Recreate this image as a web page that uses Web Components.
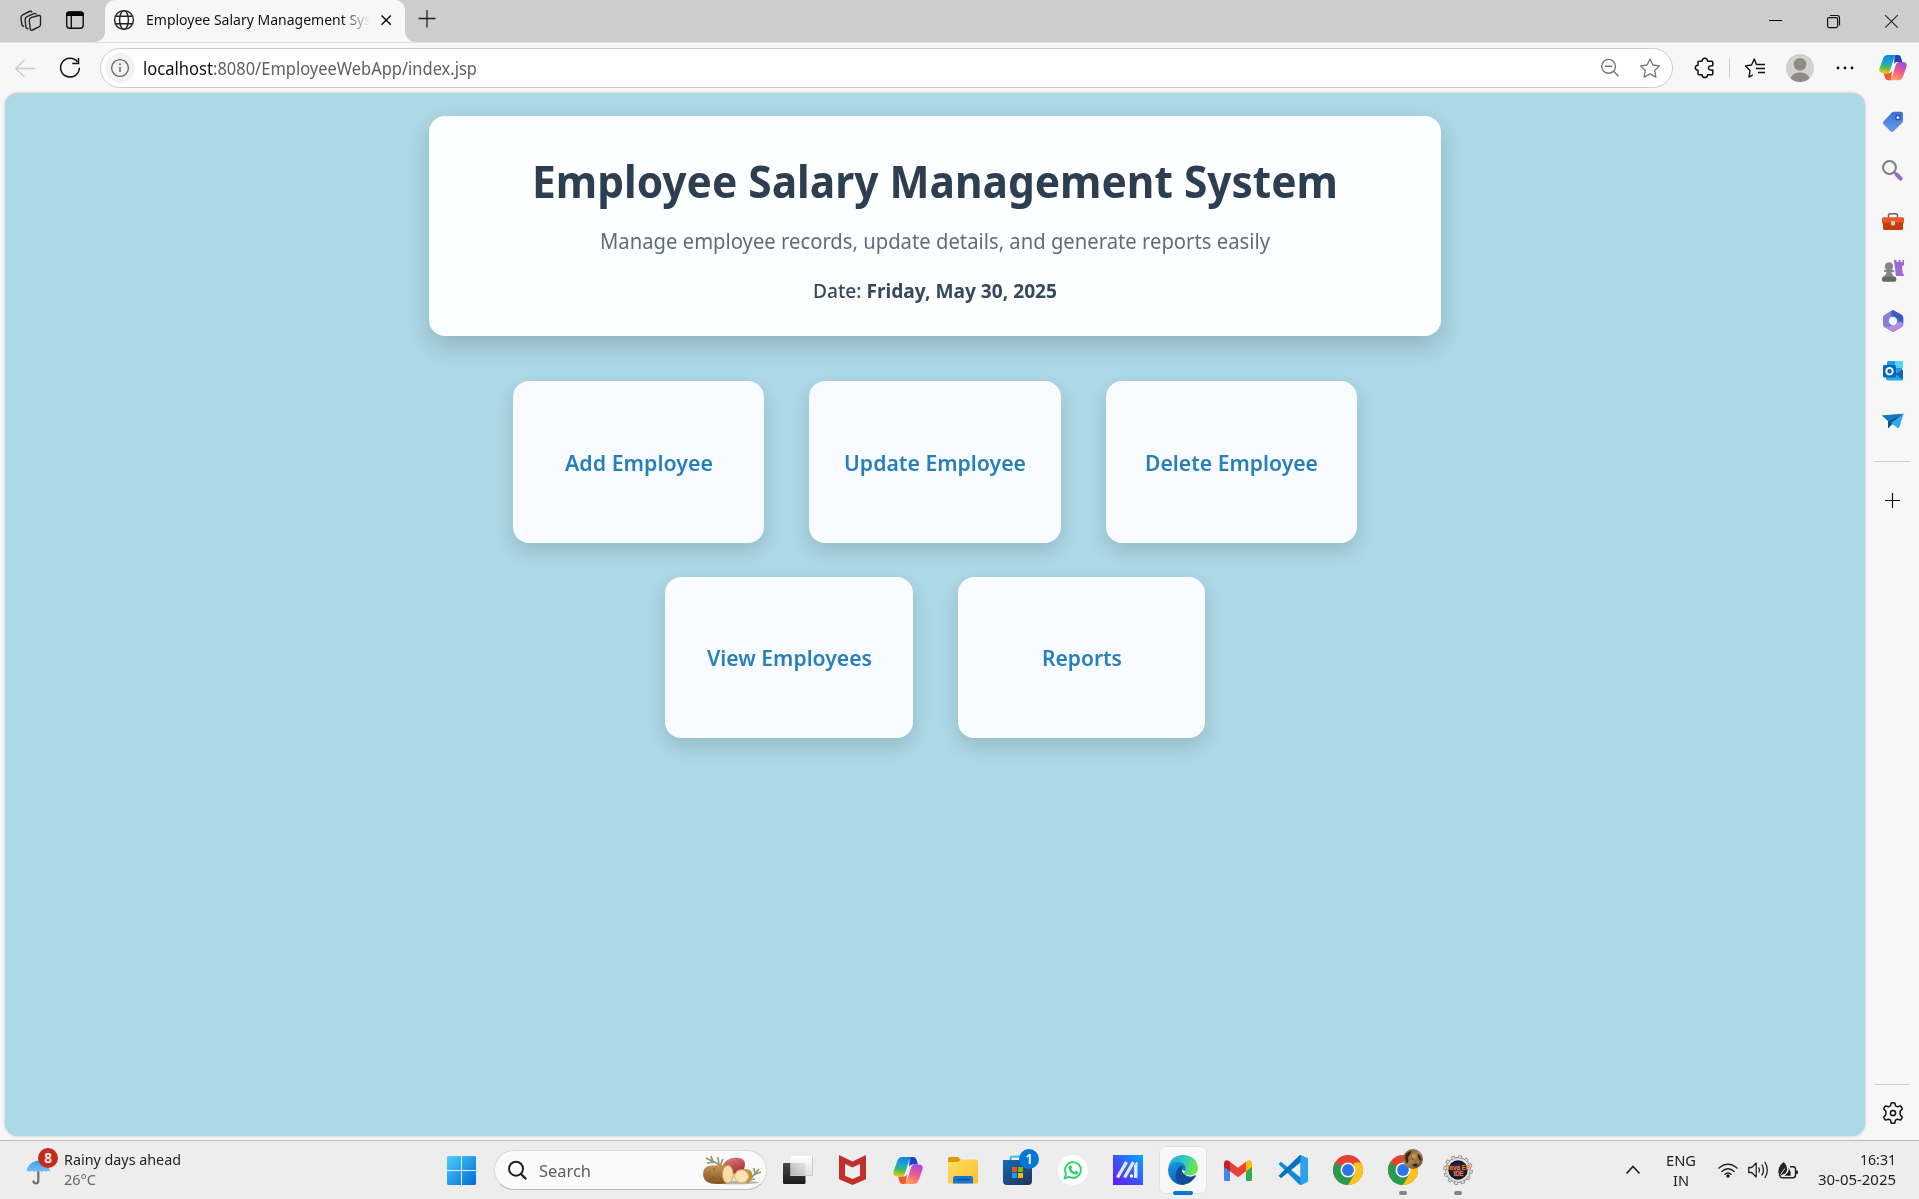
<!DOCTYPE html>
<html lang="en">
<head>
<meta charset="utf-8">
<title>Employee Salary Management System</title>
<style>
html,body{margin:0;height:100%;overflow:hidden}
body{font-family:"Noto Sans","Open Sans",sans-serif;background:#f7f7f7}
</style>
</head>
<body>
<desktop-screen></desktop-screen>
<script>
const ICONS = {
workspaces:['20 9 23 23','<g fill="none" stroke="#222" stroke-width="1.4" stroke-linejoin="round"><path d="M31 17.7l7.500-2.200q2-.5 2 1.500v7.500q0 1.700-1.500 2.400l-6.500 3.100q-1.900.7-2.300-1.200l-.9-7.600q-.1-2.700 1.700-3.500z"/><path d="M28.500 28.500q-2.200.5-2.600-1.500l-.8-7.200q0-2.300 1.800-3.200l7-3q1.900-.7 2.600 1"/><path d="M24.200 26.200q-2 .3-2.400-1.600l-.8-6.800q0-2.200 1.700-3l6.700-3.300q1.900-.6 2.600.9"/></g>'],
vtabs:['65 10 20 20','<rect x="66.700" y="12" width="16.500" height="16.200" rx="3" fill="none" stroke="#111" stroke-width="1.400"/><path d="M66 16v-1.500q0-3 3-3h12q3 0 3 3V16z" fill="#000"/><path d="M71.300 16v12" stroke="#111" stroke-width="1.400"/>'],
globe:['113 9 22 22','<g fill="none" stroke="#222" stroke-width="1.400"><circle cx="124" cy="20" r="9.400"/><ellipse cx="124" cy="20" rx="4.400" ry="9.400"/><path d="M115.500 16.300h17M115.500 23.700h17"/></g>'],
close:['380 14 12 12','<path d="M381.500 15.500l9.300 9.300M390.800 15.500l-9.300 9.300" stroke="#111" stroke-width="1.500"/>'],
plus:['418 11 18 18','<path d="M418.500 19.500h17M427 11v17.500" stroke="#222" stroke-width="1.300"/>'],
min:['1768 14 14 14','<path d="M1769 20.500h13" stroke="#000"/>'],
restore:['1826 14 15 15','<g fill="none" stroke="#111" stroke-width="1.200"><rect x="1827.600" y="17.600" width="10" height="10" rx="1.500"/><path d="M1830 15.500h7q2.500 0 2.500 2.500v7.500"/></g>'],
winclose:['1884 14 15 15','<path d="M1885.200 15.200l12.500 12.500M1897.700 15.200l-12.500 12.500" stroke="#222" stroke-width="1.100"/>'],
back:['14 57 22 21','<path d="M35 67.500H16M24.500 59l-8.800 8.500 8.800 8.500" fill="none" stroke="#ccc" stroke-width="1.300"/>'],
refresh:['59 57 22 22','<path d="M77.300 61.700A9.400 9.400 0 1 0 79.400 67.800M78.500 58v5.500h-6.200" fill="none" stroke="#111" stroke-width="1.500"/>'],
info:['105 53 30 30','<circle cx="120" cy="68" r="15" fill="#f3f3f3"/><circle cx="120" cy="68" r="8.400" fill="none" stroke="#666" stroke-width="1.400"/><path d="M120 67v5" stroke="#666" stroke-width="1.500"/><circle cx="120" cy="64.300" r="1" fill="#666"/>'],
zoomout:['1600 58 20 20','<g fill="none" stroke="#767676" stroke-width="1.400"><circle cx="1608.600" cy="66.300" r="6.900"/><path d="M1605 66.300h7.200M1613.500 71.300l5 5"/></g>'],
star:['1639 57 22 22','<path d="M1650 59l2.900 6 6.600.9-4.800 4.600 1.200 6.600-5.900-3.200-5.900 3.200 1.200-6.600-4.800-4.600 6.600-.9z" fill="none" stroke="#767676" stroke-width="1.300" stroke-linejoin="round"/>'],
puzzle:['1694 57 21 22','<path d="M1698 62.200q0-1 1-1h3q.3-3 2.800-3t2.800 3h4.200q1 0 1 1v3.500q-4.300-.3-4.300 2.200t4.300 2.200v3.600q0 1.100-1 1.100h-4.200q-.3 2.700-2.800 2.700t-2.800-2.700h-3q-1 0-1-1v-3.500q-2.700-.2-2.700-2.500t2.700-2.500z" fill="none" stroke="#111" stroke-width="1.500" stroke-linejoin="round"/>'],
favs:['1744 57 22 22','<path d="M1756.500 64.800L1754.300 59l-2.800 6-6 .9 4.500 4.600-1 6.600 3.800-2.200M1756.500 64.500h8.500M1756 68.500h9M1758 72.500h7" fill="none" stroke="#111" stroke-width="1.400" stroke-linejoin="round"/>'],
avatar:['1786 54 28 28','<defs><clipPath id="av"><circle cx="1800" cy="68" r="14"/></clipPath></defs><circle cx="1800" cy="68" r="14" fill="#d3d0cc"/><g fill="#8f8a88" clip-path="url(#av)"><circle cx="1800" cy="64.300" r="6.300"/><ellipse cx="1800" cy="80" rx="10" ry="7.600"/></g>'],
dots:['1835 62 20 12','<g fill="#111"><circle cx="1838" cy="68" r="1.400"/><circle cx="1845" cy="68" r="1.400"/><circle cx="1852" cy="68" r="1.400"/></g>'],
copilot:['0 0 30 27','<defs><linearGradient id="a" x1=".5" y1="0" x2=".35" y2="1"><stop offset="0" stop-color="#1184ee"/><stop offset=".4" stop-color="#1ba5cb"/><stop offset=".7" stop-color="#4ebd55"/><stop offset="1" stop-color="#f0c810"/></linearGradient><linearGradient id="b" x1=".7" y1="0" x2=".3" y2="1"><stop offset="0" stop-color="#a34be6"/><stop offset=".5" stop-color="#f0588c"/><stop offset="1" stop-color="#ffa45c"/></linearGradient></defs><path d="M17 0h3.500q2.300 0 3 2.500l1.500 5h-6q-2 0-3 2.500z" fill="#1c40c8"/><path d="M13 27H9.500q-2.300 0-3-2.500L5 19.500h6q2 0 3-2.500z" fill="#f25a30"/><path d="M9.500 0h9.300q-1.900.6-2.800 3.500l-4 13q-1 3-4 3H4.500Q-.6 19.500.5 14.500L4.300 4Q5.500 0 9.500 0z" fill="url(#a)"/><path d="M20.500 27h-9.300q1.900-.6 2.800-3.500l4-13q1-3 4-3h3.500q5.100 0 4 5L25.700 23q-1.200 4-5.200 4z" fill="url(#b)"/>'],
tag:['1882 109 22 22','<defs><linearGradient id="a" x2="0" y2="1"><stop stop-color="#3d70cf"/><stop offset="1" stop-color="#6a9bf3"/></linearGradient></defs><path d="M1892 111.500q.7-.7 2-.7h7q2 0 2 2v7q0 1.300-1 2.200l-8.300 8.200q-1.700 1.500-3.300 0l-6.700-6.700q-1.500-1.700 0-3.300z" fill="url(#a)"/><circle cx="1898" cy="116.500" r="2.200" fill="#eef" stroke="#254b9c" stroke-width="1.300"/>'],
lens:['1882 160 22 22','<circle cx="1889.500" cy="167.500" r="6.400" fill="#f4f6fa" stroke="#7d7d7d" stroke-width="2"/><path d="M1894.500 172.500l2 2" stroke="#777" stroke-width="2"/><path d="M1896.700 174.700l4 4" stroke="#9a66d0" stroke-width="4" stroke-linecap="round"/>'],
toolbox:['1882 210 22 22','<path d="M1888.500 218v-2.500q0-1.800 1.800-1.800h5.400q1.800 0 1.800 1.800v2.500" fill="none" stroke="#666" stroke-width="1.500"/><rect x="1882" y="217.300" width="22" height="6.500" rx="1.500" fill="#e65a25"/><path d="M1883 222.500h20v6q0 1.500-1.500 1.500h-17q-1.500 0-1.500-1.500z" fill="#c43c12"/><rect x="1891" y="221" width="4" height="4.500" rx="1" fill="#ccc"/>'],
games:['1882 260 22 22','<path d="M1894 260h2.500v2h2v-2h2v2h2v-2h1.500v5l-2 1.500.8 7q1.200.5 1.200 2.500h-8z" fill="#9b68d6"/><g fill="#858585"><circle cx="1889" cy="266.500" r="4.200"/><rect x="1884" y="270" width="10.500" height="2" rx="1"/><path d="M1886.500 271.500h5q.2 3.500 3.500 5.500h-12q3.300-2 3.500-5.500z"/><rect x="1882" y="276.800" width="14.300" height="5" rx="1.800" fill="#666"/></g>'],
m365:['1882 310 22 22','<defs><linearGradient id="a" x2=".8" y2="1"><stop stop-color="#8db5ef"/><stop offset="1" stop-color="#3157c7"/></linearGradient></defs><path d="M1893 310l8.500 4.800q1.700 1 1.700 3v6.500q0 2-1.700 3L1893 332l-8.300-4.700q-1.700-1-1.700-3V318q0-2 1.700-3z" fill="url(#a)"/><path d="M1891 311l-6.300 4q-1.700 1-1.700 3v6.300q0 2 1.700 3l4 2.200V321q0-4 4-5.500z" fill="#8a7fd6"/><path d="M1884 326q4 2.500 9.500-1.500l9-4v4q0 2-1.700 3l-7.800 4.500-8.300-4.700z" fill="#b98be0"/><path d="M1893 310l8.500 4.800q1.700 1 1.700 3v5.500l-6-4-6-3.300V311z" fill="#3b5cc6"/><circle cx="1893" cy="321" r="4.200" fill="#f5f7ff"/>'],
outlook:['1882 360 22 22','<rect x="1887" y="361" width="15" height="14" rx="1.500" fill="#1b9de2"/><path d="M1895 361h7q1 0 1 1v6h-8z" fill="#50d4f5"/><path d="M1886 371h17v9.500h-15q-2 0-2-2z" fill="#28a8ea"/><path d="M1895 374l8-4.500v10z" fill="#1366b0"/><rect x="1883" y="365" width="13" height="12.500" rx="1.500" fill="#0767bd"/><circle cx="1889.500" cy="371.200" r="3.200" fill="none" stroke="#fff" stroke-width="1.900"/>'],
send:['1882 412 22 18','<path d="M1882 415.500l21.500-1.800-14 8z" fill="#2cb1ea"/><path d="M1903.500 413.700L1898 428l-5.500-4z" fill="#1187dc"/><path d="M1903.500 413.700L1888 421v7.500l4.500-4.500z" fill="#0b5391"/><path d="M1882 415.500l21.500-1.800-15.500 7.300z" fill="#1477b9"/><path d="M1903.500 413.700L1891 423l7 5q1.200 0 1.500-1z" fill="#31a9f0"/>'],
splus:['1885 493 16 16','<path d="M1885 500.500h15M1892.500 493v15" stroke="#111" stroke-width="1.200"/>'],
gear:['1882 1102 22 22','<path d="M1891.200 1103q1.800-.5 3.600 0l.6 2.700q1 .9 2.300 1l2.700-.8q1.400 1.300 1.900 3l-2 2.100q-.5 2 0 4l2 2.100q-.5 1.700-1.900 3l-2.700-.8q-1.300.1-2.300 1l-.6 2.700q-1.800.5-3.600 0l-.6-2.700q-1-.9-2.300-1l-2.700.8q-1.400-1.300-1.900-3l2-2.100q.5-2 0-4l-2-2.100q.5-1.700 1.900-3l2.700.8q1.300-.1 2.300-1z" fill="none" stroke="#111" stroke-width="1.500" stroke-linejoin="round"/><circle cx="1893" cy="1113" r="2.600" fill="none" stroke="#111" stroke-width="1.500"/>'],
umbrella:['26 1158 26 27','<defs><linearGradient id="a" x2="0" y2="1"><stop stop-color="#3f9ce8"/><stop offset="1" stop-color="#79c0fb"/></linearGradient></defs><path d="M38.300 1170v11q0 2.300-2.400 2.300t-2.700-2.700" fill="none" stroke="#6f6f73" stroke-width="2.200"/><path d="M26 1171.500q2.500-9.500 12-11 9.500 1.500 12.500 11-2.500-1.200-4.500.2-2-1.300-4 .2-2-1.300-4-.2-2-1.100-4 .2-1.700-1.500-4-.2-2-1.400-4-.2z" fill="url(#a)"/>'],
windows:['447 1156 29 29','<defs><linearGradient id="a" x2="1" y2="1" gradientUnits="userSpaceOnUse" gradientTransform="translate(447 1156) scale(29)"><stop stop-color="#4cd0ff"/><stop offset="1" stop-color="#0068d0"/></linearGradient></defs><path d="M448 1156h13v14h-14v-13zM462 1156h13l1 1v13h-14zM447 1171h14v14h-13l-1-1zM462 1171h14v13l-1 1h-13z" fill="url(#a)"/>'],
search:['507 1160 20 20','<circle cx="516" cy="1168.700" r="7" fill="none" stroke="#1f1f1f" stroke-width="1.900"/><path d="M521 1174l4.500 4.500" stroke="#1f1f1f" stroke-width="2.400" stroke-linecap="round"/>'],
potato:['702 1155 60 30','<defs><linearGradient id="a" x2="0" y2="1"><stop stop-color="#c99553"/><stop offset="1" stop-color="#81501f"/></linearGradient><linearGradient id="b" x2=".5" y2="1"><stop stop-color="#e08888"/><stop offset="1" stop-color="#a32d30"/></linearGradient></defs><ellipse cx="735" cy="1182.500" rx="24" ry="1.800" fill="#bdb5aa"/><path d="M706 1158l16 8M711 1156l2 6M718 1157l1 8M707 1163l8-1M723 1159l-3 7M759 1169l-12 14M761 1172l-8 3M754 1168l1 6M743 1181l12-2" stroke="#8a9a72" stroke-width="1.700" fill="none"/><path d="M722 1167q3-9 14-9.500 10 .5 9 8-1 8-10 9z" fill="url(#b)"/><path d="M703 1174q0-9 10-8.500 9-1 16 .5l4 10-7 7.500q-8 .8-15 0-8-2-8-9.500z" fill="url(#a)"/><ellipse cx="727.800" cy="1174.300" rx="5.500" ry="9" fill="#f6dda5" stroke="#c89850"/><path d="M737 1171q9-4 14 0 3 5-1 10-6 3-10 0z" fill="#bd8f42"/><ellipse cx="741.500" cy="1176.300" rx="7" ry="6.500" fill="#fae5b2" stroke="#ddb26c"/><g fill="#7a4c20"><circle cx="709" cy="1172" r=".7"/><circle cx="714" cy="1169" r=".7"/><circle cx="713" cy="1177" r=".7"/></g>'],
taskview:['782 1155 32 31','<defs><linearGradient id="a" x2="0" y2="1"><stop stop-color="#484848"/><stop offset="1" stop-color="#1c1c1c"/></linearGradient><linearGradient id="b" x1="1" x2="0" y2="1"><stop stop-color="#e4e4e4"/><stop offset="1" stop-color="#b4b4b4"/></linearGradient><linearGradient id="c" x2="0" y2="1"><stop stop-color="#fff"/><stop offset="1" stop-color="#dedede"/></linearGradient></defs><rect x="783" y="1163" width="22.500" height="21" rx="1.200" fill="url(#a)"/><rect x="790.500" y="1156" width="22" height="20" rx="1.200" fill="url(#c)"/><path d="M790.500 1163h15v13h-15z" fill="url(#b)"/><path d="M790.500 1175.500h22v-19" fill="none" stroke="#ccc"/>'],
mcafee:['838 1154 29 32','<path d="M839 1155l13.500 6.500 13.500-6.500v24.300l-13.500 5.800-13.500-5.800zM845 1164v11.700l7.500 3.400 7.500-3.400V1164l-7.500 3.600z" fill="#c22f2d" fill-rule="evenodd"/>'],
folder:['947 1156 32 29','<defs><linearGradient id="a" x2="1" y2="1"><stop stop-color="#ffdc62"/><stop offset="1" stop-color="#fac02f"/></linearGradient></defs><path d="M948 1158.500q0-1.500 1.500-1.500h8.500l3.500 3.500v4H948z" fill="#db9b05"/><path d="M948 1162h10l3.500-2.500H976q2 0 2 1.500v22.500h-30z" fill="url(#a)"/><path d="M953 1183.500v-5.300q0-2.200 2.200-2.200h15.600q2.200 0 2.200 2.200v5.300z" fill="#1478ce"/><path d="M956.500 1179.500h13" stroke="#0b4e99" stroke-width="1.300"/>'],
store:['1002 1154 32 32','<defs><linearGradient id="a" x2=".7" y2="1"><stop stop-color="#1269b8"/><stop offset="1" stop-color="#233a60"/></linearGradient></defs><path d="M1010.500 1162v-3q0-2.300 2.300-2.300h10" fill="none" stroke="#28b4ee" stroke-width="1.800"/><path d="M1003 1160h29v21q0 4-4 4h-21q-4 0-4-4z" fill="url(#a)"/><path d="M1012 1167h5v5h-5z" fill="#f25022"/><path d="M1018 1167h5v5h-5z" fill="#7fba00"/><path d="M1012 1173h5v5h-5z" fill="#12a5ee"/><path d="M1018 1173h5v5h-5z" fill="#ffb900"/>'],
whatsapp:['1058 1155 30 30','<circle cx="1073" cy="1170" r="15" fill="#fff"/><path d="M1064.700 1178.300l1.300-4.600a7.900 7.900 0 1 1 3 3.100z" fill="none" stroke="#2bd266" stroke-width="1.800"/><path d="M1070 1165.500q1-.8 1.500.3l.7 1.800-1 1.500q1.200 2.200 3.300 3l1.500-1.300 2.200 1.200q.2 2.600-2.800 2.600-6-1-7-6.500 0-1.700 1.600-2.600z" fill="#2bd266"/>'],
mo:['1113 1155 30 30','<defs><linearGradient id="a" x1="0" y1="1" x2="1" y2="0"><stop stop-color="#6714f6"/><stop offset=".5" stop-color="#3a56fa"/><stop offset="1" stop-color="#00acff"/></linearGradient></defs><path d="M1113 1155h30v30h-30z" fill="url(#a)"/><path d="M1117.500 1177.500l9-15.500M1124.500 1177.500l9-15.500" stroke="#dfeaff" stroke-width="3.400"/><path d="M1137 1162v15.500h-2.500v-12z" fill="#dfeaff" stroke="#dfeaff"/><circle cx="1131.500" cy="1176" r="1.700" fill="#fff"/>'],
edge:['1168 1155 30 30','<defs><linearGradient id="a" x2="1" y2=".3"><stop stop-color="#29a9e8"/><stop offset=".5" stop-color="#2dc3cb"/><stop offset="1" stop-color="#6be453"/></linearGradient><linearGradient id="b" x2=".4" y2="1"><stop stop-color="#1b9ce4"/><stop offset="1" stop-color="#0863ba"/></linearGradient></defs><path d="M1168.500 1167q2-11.500 14.500-12 13 .5 15 12 .3 7-6.500 8.300-4 .5-6.500-1-1.500-1-.5-2.300 2-2 .3-5.500-3.500-5-9.500-4-4.500 1-6.800 4.500z" fill="url(#a)"/><path d="M1168 1170q.5-7.500 8.500-8.300 6-.2 8.500 4 1.500 3 0 5.500-4-3-7 1-2.500 6 3 10 1.500 1.500 4.500 2.700-9.500 1-14.500-6-3-4-3-8.900z" fill="url(#b)"/><path d="M1177 1170q2-4.500 6-3.800-2.500 3.800.5 7.300 5.500 5.500 11.500 1.800 1.500-.3.700 1.200-5.200 8-13.200 8.200-6.500-2-6.800-8.500-.1-3.500 1.300-6.200z" fill="#144b96"/>'],
gmail:['1223 1158 30 23','<path d="M1224 1162l6 4v14h-4.500q-1.500 0-1.500-1.500z" fill="#4285f4"/><path d="M1246 1166l6-4v16.500q0 1.500-1.500 1.500h-4.500z" fill="#34a853"/><path d="M1246 1160.800l1-.8q1.800-1 3.500-.4 1.500.9 1.500 2.900v3.500l-6 4.500z" fill="#fbbc04"/><path d="M1230 1160.800l8 6 8-6v9.500l-8 6-8-6z" fill="#ea4335"/><path d="M1224 1162.500q0-2 1.500-2.900 1.700-.6 3.500.4l1 .8v9.700l-6-4.500z" fill="#c5221f"/>'],
vscode:['1278 1155 30 30','<path d="M1300.500 1155l7.500 3.500v23l-7.500 3.500z" fill="#27a4ee"/><path d="M1278.500 1164l2.500-2.200 20 16.200v7l-1.500-.3z" fill="#1688cd"/><path d="M1278.500 1175.800l2.500 2.400 20-16.200v-7l-1.500.3z" fill="#0873bd"/><path d="M1300.500 1155v30l1 0 6.500-3.500v-23z" fill="#29a3e9"/>'],
chrome:['-15 -15 30 30','<circle r="15" fill="#e44331"/><path d="M-13 -7.500L-6.500 3.700 0 7.500 0 15A15 15 0 0 1 -13 -7.500z" fill="#269c50"/><path d="M13 -7.500A15 15 0 0 1 -.6 15L6.500 3.700 6 -7.500z" fill="#fcc31e"/><path d="M-13 -7.500L-6.500 3.700L0 0zM0 15L6.500 3.700 0 0-6.500 3.700q3 4 7 3.800z" fill="#269c50"/><path d="M-13 -7.500h26L0-7.500z" fill="#e44331"/><circle r="7.500" fill="#fff"/><circle r="5.900" fill="#2e74e8"/>'],
face:['0 0 20 20','<defs><linearGradient id="a" x2="1" y2="1"><stop stop-color="#6b4d2b"/><stop offset=".5" stop-color="#ab8450"/><stop offset="1" stop-color="#59401f"/></linearGradient></defs><circle cx="10" cy="10" r="10" fill="url(#a)"/><path d="M2.500 6q2.500-3.500 6-4l-1 3-2.500 3 .5 4-1.500 3q-2.500-4-1.500-9zM14.500 4l3 3.500 1 4-2-.5-1.500-3zM8 10l2.500-.5-.5 1.500zM9 15.500l4-1 2 2-3 1.500z" fill="#35271a"/><path d="M9 5l4 .5-.5 3-3 .5zM14 12l2 .5-1 2z" fill="#c49a63"/>'],
eclipse:['1443 1155 30 30','<defs><radialGradient id="a"><stop stop-color="#4b3c7c"/><stop offset="1" stop-color="#14101f"/></radialGradient></defs><circle cx="1458" cy="1170" r="12.600" fill="#ddd" stroke="#777" stroke-width=".8"/><circle cx="1458" cy="1170" r="13.300" fill="none" stroke="#777" stroke-width="2.800" stroke-dasharray="3.480 3.480"/><circle cx="1458" cy="1170" r="13" fill="none" stroke="#e4e4e4" stroke-width="2" stroke-dasharray="2.400 4.407" stroke-dashoffset="-.5"/><circle cx="1458" cy="1170" r="9.700" fill="url(#a)"/><g font-family="Liberation Sans,sans-serif" font-weight="bold" font-size="6.500" fill="#f47a1c" text-anchor="middle"><text x="1458" y="1169.500" textLength="24" lengthAdjust="spacingAndGlyphs">Java EE</text><text x="1458.500" y="1175.500" textLength="10">IDE</text></g>'],
chevron:['1625 1164 16 12','<path d="M1626.500 1173.500l6.500-7 6.500 7" fill="none" stroke="#222" stroke-width="1.700"/>'],
wifi:['1717 1160 22 18','<g fill="none" stroke="#222" stroke-width="1.400"><path d="M1718.500 1167.500q9.500-8.500 19 0M1721.500 1170.700q6.500-6 13 0M1724.500 1173.700q3.500-3.200 7 0"/></g><circle cx="1728" cy="1175" r="1.800" fill="#222"/>'],
sound:['1747 1160 22 20','<g fill="none" stroke="#222" stroke-width="1.300" stroke-linejoin="round"><path d="M1748.700 1167.500h3l4.500-4.500v14l-4.500-4.500h-3z"/><path d="M1758.700 1167.300q1.600 2.700 0 5.400M1761.800 1164.500q3.400 5.500 0 11M1764.800 1162q5 8 0 16"/></g>'],
battery:['1777 1159 22 19','<path d="M1790 1164.700h3q2.500 0 2.500 2.500v6q0 2.500-2.500 2.500h-10.500q-2 0-2.700-1.500" fill="none" stroke="#222" stroke-width="1.400"/><path d="M1796 1168.500h1.200q.8 0 .8.800v2q0 .8-.8.800h-1.200z" fill="#222"/><path d="M1783.700 1160q4 4 3.300 8.500-1.200 3.700-5.200 4.300l-2.300 1.700-.9-.8.600-1.500q-.9-1-.9-2.700 0-5.500 5.400-9.500z" fill="#222"/><path d="M1788.700 1165.500q.3 4.500-2.500 6.500l-1.700 1.700h6.200v-3.500" fill="#222"/><path d="M1780.500 1172.500l4.300-6" stroke="#ededed" stroke-width=".9"/>']
};

class UiIcon extends HTMLElement {
  connectedCallback(){
    if(this.shadowRoot) return;
    const [box, art] = ICONS[this.getAttribute('name')];
    const [, , w, h] = box.split(' ').map(Number);
    const W = +(this.getAttribute('w') || w);
    this.attachShadow({mode:'open'}).innerHTML =
      `<style>:host{display:block;flex:none;width:${W}px}svg{display:block;overflow:visible}</style><svg width="${W}" height="${W*h/w}" viewBox="${box}">${art}</svg>`;
  }
}
customElements.define('ui-icon', UiIcon);

/* Single line of text, condensed or widened so that it fills the width given in "w". */
class FitText extends HTMLElement {
  connectedCallback(){
    if(this.shadowRoot) return;
    const a = n => this.getAttribute(n);
    this.attachShadow({mode:'open'}).innerHTML =
      `<style>:host{display:block;flex:none;${a('w')?`width:${a('w')}px;`:''}white-space:pre;font:${a('weight')||400} ${a('size')}px/${a('lh')||20}px "Noto Sans","Open Sans",sans-serif;color:${a('color')||'#222'}}span{display:inline-block;vertical-align:top;transform-origin:0 0}::slotted(b){font-weight:700}</style><span><slot></slot></span>`;
    const s = this.shadowRoot.querySelector('span');
    if(a('w')) s.style.transform = `scaleX(${+a('w') / s.getBoundingClientRect().width})`;
  }
}
customElements.define('fit-text', FitText);

const define = (name, css, html) => customElements.define(name, class extends HTMLElement {
  constructor(){ super(); this.attachShadow({mode:'open'}).innerHTML = `<style>*{box-sizing:border-box}${css}</style>${html}`; }
});

define('browser-tabs', `
:host{display:flex;height:42px;background:#cdcdcd;align-items:flex-start}
.l{width:95px;padding:9px 0 0 20px;display:flex;gap:22px}
.l :last-child{margin-top:1px}
.f{width:10px;height:10px;align-self:flex-end;background:radial-gradient(circle at 0 0,#cdcdcd 9.5px,#f7f7f7 10px)}
.f.r{background:radial-gradient(circle at 100% 0,#cdcdcd 9.5px,#f7f7f7 10px)}
.tab{width:300px;height:42px;background:#f7f7f7;border-radius:10px 10px 0 0;display:flex;padding-left:8px}
.tab>ui-icon{margin-top:9px}
.t{width:224px;margin:9px 11px 0 11px;overflow:hidden;-webkit-mask:linear-gradient(90deg,#000 195px,transparent 224px)}
.tab>.x{margin-top:14px;margin-left:-1px}
.p{margin:10px 0 0 3px}
.w{margin:14px 20px 0 auto;display:flex;gap:43px}
.w :first-child{margin-right:1px}
`, `<div class="l"><ui-icon name="workspaces"></ui-icon><ui-icon name="vtabs"></ui-icon></div><div class="f"></div>
<div class="tab"><ui-icon name="globe"></ui-icon><div class="t"><fit-text size="14.6" w="251" color="#111">Employee Salary Management System</fit-text></div><ui-icon class="x" name="close"></ui-icon></div>
<div class="f r"></div><ui-icon class="p" name="plus"></ui-icon>
<div class="w"><ui-icon name="min"></ui-icon><ui-icon name="restore"></ui-icon><ui-icon name="winclose"></ui-icon></div>`);

define('browser-toolbar', `
:host{display:flex;height:51px;background:#f7f7f7;align-items:center;border-top:1px solid #e2e2e2;padding-left:14px}
.bar{width:1573px;height:40px;border:1px solid #ccc;border-radius:20px;background:#fff;margin-left:19px;display:flex;align-items:center;padding:0 11px 0 4px}
.r{margin-left:23px}
.u{display:flex;margin:-1px 0 0 8px}
.z{margin-left:auto}.s{margin-left:19px}
.sep{width:1px;height:20px;background:#ccc;margin:0 14px 0 14px}
`, `<ui-icon name="back"></ui-icon><ui-icon class="r" name="refresh"></ui-icon>
<div class="bar"><ui-icon name="info"></ui-icon><div class="u"><fit-text size="17.4" lh="24" w="70" color="#111">localhost</fit-text><fit-text size="17.4" lh="24" w="264" color="#606060">:8080/EmployeeWebApp/index.jsp</fit-text></div><ui-icon class="z" name="zoomout"></ui-icon><ui-icon class="s" name="star"></ui-icon></div>
<ui-icon name="puzzle" style="margin-left:21px"></ui-icon><div class="sep"></div><ui-icon name="favs"></ui-icon><ui-icon name="avatar" style="margin-left:20px"></ui-icon><ui-icon name="dots" style="margin-left:21px"></ui-icon><ui-icon name="copilot" w="28" style="margin-left:24px"></ui-icon>`);

define('nav-card', `
:host{display:flex;justify-content:center;height:162px;background:#f8fbff;border-radius:16px;box-shadow:0 8px 20px rgba(0,0,0,.145);padding-top:67px}
`, `<slot></slot>`);

define('employee-page', `
:host{display:flex;flex-direction:column;align-items:center;width:1860px;height:1043px;background:#add8e6;border-radius:13px;box-shadow:0 0 3px rgba(0,0,0,.25);padding-top:23px}
.h{width:1012px;height:220px;background:#fdfeff;border-radius:16px;box-shadow:0 10px 26px rgba(0,0,0,.175);display:flex;flex-direction:column;align-items:center;padding-top:35px}
.row{display:flex;gap:45px;margin-top:45px}
.row+.row{margin-top:34px}
`, `<div class="h"><fit-text size="44" lh="60" weight="700" w="806" color="#2c3e50">Employee Salary Management System</fit-text>
<fit-text style="margin-top:14px" size="22" lh="30" w="670" color="#5d6d7e">Manage employee records, update details, and generate reports easily</fit-text>
<fit-text style="margin-top:22px" size="19.6" lh="28" weight="500" w="244" color="#34495e">Date: <b>Friday, May 30, 2025</b></fit-text></div>
<div class="row">
<nav-card style="width:251px"><fit-text size="22.4" lh="30" weight="600" w="148" color="#2980b9">Add Employee</fit-text></nav-card>
<nav-card style="width:252px"><fit-text size="22.4" lh="30" weight="600" w="182" color="#2980b9">Update Employee</fit-text></nav-card>
<nav-card style="width:251px"><fit-text size="22.4" lh="30" weight="600" w="173" color="#2980b9">Delete Employee</fit-text></nav-card></div>
<div class="row">
<nav-card style="width:248px;height:161px;padding-top:66px"><fit-text size="22.4" lh="30" weight="600" w="165" color="#2980b9">View Employees</fit-text></nav-card>
<nav-card style="width:247px;height:161px;padding-top:66px"><fit-text size="22.4" lh="30" weight="600" w="80" color="#2980b9">Reports</fit-text></nav-card></div>`);

define('side-bar', `
:host{box-sizing:border-box;display:flex;flex-direction:column;align-items:center;width:54px;height:1047px;padding:3px 0 0 2px}
.i{height:50px;display:flex;align-items:center}
hr{border:0;margin:0 1px 0 0;width:35px;height:1px;background:#ccc}
`, ['tag','lens','toolbox','games','m365','outlook','send'].map(n=>`<div class="i"><ui-icon name="${n}"></ui-icon></div>`).join('') +
`<hr style="margin-top:15px"><ui-icon name="splus" style="margin-top:31px"></ui-icon><hr style="margin-top:auto"><ui-icon name="gear" style="margin:17px 0 16px"></ui-icon>`);

define('task-bar', `
:host{display:flex;height:59px;background:#ededed;border-top:1px solid #bbb;padding-left:26px}
.w{display:flex;width:408px}
.u{position:relative;width:26px;padding-top:17px}
.badge{position:absolute;width:20px;height:20px;border-radius:50%;display:flex;justify-content:center}
.c{padding:8px 0 0 12px}
.i{width:55px;display:flex;justify-content:center;align-items:center;position:relative;flex:none;height:58px}
.s{width:273px;height:40px;margin:9px 3px 0 5px;border:1px solid #dadada;border-bottom-color:#bbb;border-radius:20px;background:#fafafa;display:flex;align-items:center;padding:0 4px 0 12px}
.s fit-text{margin:1px 0 0 12px}.s :last-child{margin-left:auto}
.on{width:48px;height:48px;border-radius:6px;background:#f8f8f8;border:1px solid #e3e3e3;display:flex;align-items:center;justify-content:center}
.bar{position:absolute;bottom:4px;height:4px;width:8px;border-radius:2px;background:#858585}
.tray{margin-left:auto;padding-right:23px;display:flex}
.tray>ui-icon{align-self:center}
.col{padding-top:8px;display:flex;flex-direction:column}
`, `<div class="w"><div class="u"><ui-icon name="umbrella"></ui-icon><div class="badge" style="left:12px;top:7px;background:#c42b1c"><fit-text size="13.500" weight="600" color="#fff">8</fit-text></div></div>
<div class="c"><fit-text size="14.8" w="117" color="#222">Rainy days ahead</fit-text><fit-text size="14.8" w="32" color="#666">26°C</fit-text></div></div>
<div class="i"><ui-icon name="windows"></ui-icon></div>
<div class="s"><ui-icon name="search"></ui-icon><fit-text size="17" lh="24" w="52" color="#5c5c5c">Search</fit-text><ui-icon name="potato"></ui-icon></div>
${['taskview','mcafee','copilot','folder'].map(n=>`<div class="i"><ui-icon name="${n}"></ui-icon></div>`).join('')}
<div class="i"><ui-icon name="store"></ui-icon><div class="badge" style="left:29px;top:8px;background:#0078d4"><fit-text size="13.500" weight="600" color="#fff">1</fit-text></div></div>
<div class="i"><ui-icon name="whatsapp"></ui-icon></div><div class="i"><ui-icon name="mo"></ui-icon></div>
<div class="i"><div class="on"><ui-icon name="edge"></ui-icon></div><div class="bar" style="width:20px;background:#0078d4"></div></div>
<div class="i"><ui-icon name="gmail"></ui-icon></div><div class="i"><ui-icon name="vscode"></ui-icon></div><div class="i"><ui-icon name="chrome"></ui-icon></div>
<div class="i"><ui-icon name="chrome"></ui-icon><div class="badge" style="left:28px;top:8px"><ui-icon name="face"></ui-icon></div><div class="bar"></div></div>
<div class="i"><ui-icon name="eclipse"></ui-icon><div class="bar"></div></div>
<div class="tray"><ui-icon name="chevron"></ui-icon><div class="col" style="align-items:center;margin:0 21px 0 25px;padding-top:9px"><fit-text size="14.8" w="30">ENG</fit-text><fit-text size="14.8" w="16">IN</fit-text></div>
<ui-icon name="wifi"></ui-icon><ui-icon name="sound" style="margin-left:8px"></ui-icon><ui-icon name="battery" style="margin-left:8px"></ui-icon>
<div class="col" style="align-items:flex-end;margin-left:19px"><fit-text size="14.8" w="36">16:31</fit-text><fit-text size="14.8" w="78">30-05-2025</fit-text></div></div>`);

define('desktop-screen', `
:host{display:flex;flex-direction:column;width:1919px;height:1199px;background:#f7f7f7;overflow:hidden}
.m{display:flex;padding-left:5px;height:1047px}
`, `<browser-tabs></browser-tabs><browser-toolbar></browser-toolbar><div class="m"><employee-page></employee-page><side-bar></side-bar></div><task-bar></task-bar>`);
</script>
</body>
</html>
